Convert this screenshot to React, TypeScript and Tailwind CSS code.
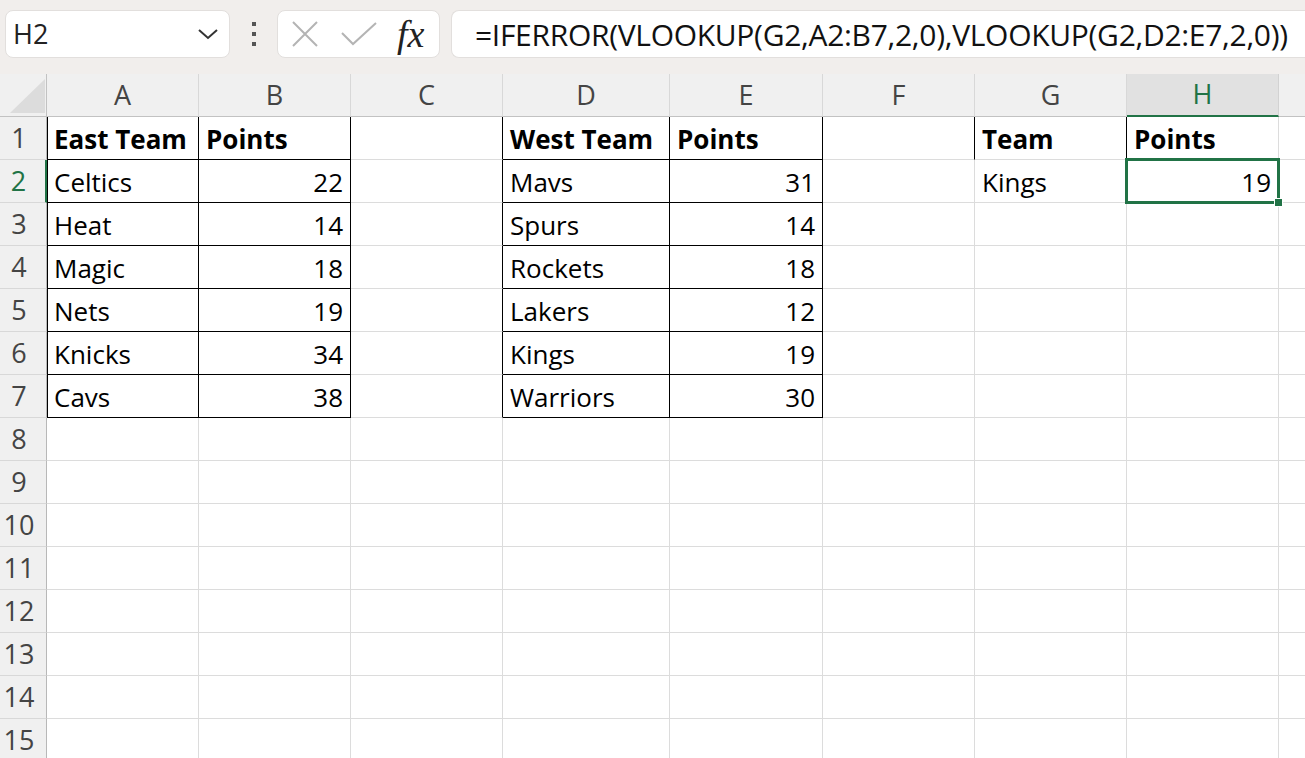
import React from "react";

type Col = { key: string; width: string; label?: boolean };

const columns: Col[] = [
  { key: "A", width: "w-[152px]", label: true },
  { key: "B", width: "w-[152px]", label: true },
  { key: "C", width: "w-[152px]", label: true },
  { key: "D", width: "w-[167px]", label: true },
  { key: "E", width: "w-[153px]", label: true },
  { key: "F", width: "w-[152px]", label: true },
  { key: "G", width: "w-[152px]", label: true },
  { key: "H", width: "w-[152px]", label: true },
  // column I only peeks in at the right edge, its letter is off-screen
  { key: "I", width: "w-[152px]", label: false },
];

type CellValue = { text: string; bold?: boolean; right?: boolean };

const data: Record<string, CellValue> = {
  A1: { text: "East Team", bold: true },
  B1: { text: "Points", bold: true },
  D1: { text: "West Team", bold: true },
  E1: { text: "Points", bold: true },
  G1: { text: "Team", bold: true },
  H1: { text: "Points", bold: true },
  A2: { text: "Celtics" },
  B2: { text: "22", right: true },
  A3: { text: "Heat" },
  B3: { text: "14", right: true },
  A4: { text: "Magic" },
  B4: { text: "18", right: true },
  A5: { text: "Nets" },
  B5: { text: "19", right: true },
  A6: { text: "Knicks" },
  B6: { text: "34", right: true },
  A7: { text: "Cavs" },
  B7: { text: "38", right: true },
  D2: { text: "Mavs" },
  E2: { text: "31", right: true },
  D3: { text: "Spurs" },
  E3: { text: "14", right: true },
  D4: { text: "Rockets" },
  E4: { text: "18", right: true },
  D5: { text: "Lakers" },
  E5: { text: "12", right: true },
  D6: { text: "Kings" },
  E6: { text: "19", right: true },
  D7: { text: "Warriors" },
  E7: { text: "30", right: true },
  G2: { text: "Kings" },
  H2: { text: "19", right: true },
};

const rows = Array.from({ length: 15 }, (_, i) => i + 1);

function FormulaBar() {
  return (
    <div className="flex h-[74px] items-start bg-[#f1eeec] pt-[10px]">
      <div className="ml-[5px] flex h-[48px] w-[225px] items-center justify-between rounded-[8px] border border-[#e2dfdd] bg-white pl-[7px] pr-[10px]">
        <span className="text-[27px] text-[#222]">H2</span>
        <svg width="22" height="14" viewBox="0 0 22 14">
          <path d="M2 3 L11 11 L20 3" fill="none" stroke="#333" strokeWidth="2" />
        </svg>
      </div>
      <div className="flex h-[48px] w-[47px] flex-col items-center justify-center gap-[6px]">
        <span className="block h-[4px] w-[4px] bg-[#555]" />
        <span className="block h-[4px] w-[4px] bg-[#555]" />
        <span className="block h-[4px] w-[4px] bg-[#555]" />
      </div>
      <div className="flex h-[48px] w-[163px] items-center rounded-[8px] border border-[#e2dfdd] bg-white pl-[12px]">
        <svg width="30" height="30" viewBox="0 0 30 30">
          <path d="M3 3 L27 27 M27 3 L3 27" stroke="#b4b4b4" strokeWidth="2" />
        </svg>
        <svg className="ml-[20px]" width="38" height="26" viewBox="0 0 38 26">
          <path d="M2 12 L13 23 L36 2" fill="none" stroke="#b4b4b4" strokeWidth="2" />
        </svg>
        <span className="ml-[19px] font-['Liberation_Serif',serif] text-[38px] italic leading-none text-[#222]">
          fx
        </span>
      </div>
      <div className="ml-[11px] flex h-[48px] flex-1 items-center rounded-l-[8px] border border-r-0 border-[#e2dfdd] bg-white pl-[23px]">
        <span className="text-[30px] tracking-[-0.3px] text-[#111]">
          =IFERROR(VLOOKUP(G2,A2:B7,2,0),VLOOKUP(G2,D2:E7,2,0))
        </span>
      </div>
    </div>
  );
}

function HeaderRow() {
  return (
    <div className="flex h-[43px] shrink-0">
      <div className="relative h-full w-[47px] shrink-0 border-r border-b border-[#c2c2c2] bg-[#f0f0f0]">
        <svg className="absolute left-[10px] top-[5px]" width="35" height="34" viewBox="0 0 35 34">
          <path d="M0 34 L35 34 L35 0 Z" fill="#dcdcdc" />
        </svg>
      </div>
      {columns.map((col) => {
        const active = col.key === "H";
        return (
          <div
            key={col.key}
            className={`${col.width} flex h-full shrink-0 items-center justify-center border-r ${
              active
                ? "border-r-[#d2d2d2] border-b-2 border-b-[#217346] bg-[#e1e1e1] text-[#217346]"
                : "border-r-[#d8d8d8] border-b border-b-[#c2c2c2] bg-[#f0f0f0] text-[#444]"
            } text-[27px]`}
          >
            {col.label ? col.key : null}
          </div>
        );
      })}
    </div>
  );
}

function Cell({ col, row }: { col: Col; row: number }) {
  const id = `${col.key}${row}`;
  const value = data[id];
  const inTable = row <= 7;
  const blackRight =
    (inTable && ["A", "B", "C", "D", "E"].includes(col.key)) ||
    (row === 1 && (col.key === "F" || col.key === "G"));
  const blackBottom = inTable && ["A", "B", "D", "E"].includes(col.key);
  const leftEdge = inTable && col.key === "A";
  const selected = id === "H2";

  return (
    <div
      className={`${col.width} relative flex h-full shrink-0 items-center border-r border-b px-[7px] pt-[2px] text-[26px] text-black ${
        blackRight ? "border-r-black" : "border-r-[#dcdcdc]"
      } ${blackBottom ? "border-b-black" : "border-b-[#dcdcdc]"} ${
        leftEdge ? "shadow-[inset_1px_0_0_#000]" : ""
      } ${value?.right ? "justify-end" : "justify-start"} ${value?.bold ? "font-bold" : ""}`}
    >
      {value && <span className="whitespace-nowrap">{value.text}</span>}
      {selected && (
        <>
          <div className="absolute -inset-[2px] z-10 border-[3px] border-[#217346]" />
          <div className="absolute -right-[5px] -bottom-[5px] z-20 h-[9px] w-[9px] border border-white bg-[#217346]" />
        </>
      )}
    </div>
  );
}

function GridRow({ row }: { row: number }) {
  const active = row === 2;
  return (
    <div className="flex h-[43px] shrink-0">
      <div
        className={`flex h-full w-[47px] shrink-0 items-center justify-center border-b border-b-[#d8d8d8] bg-[#f0f0f0] pr-[8px] text-[27px] ${
          active
            ? "border-r-2 border-r-[#217346] text-[#217346]"
            : "border-r border-r-[#b8b8b8] text-[#444]"
        }`}
      >
        {row}
      </div>
      {columns.map((col) => (
        <Cell key={col.key} col={col} row={row} />
      ))}
    </div>
  );
}

export default function App() {
  return (
    <div className="flex h-[758px] w-[1305px] flex-col overflow-hidden bg-white font-['Open_Sans',sans-serif]">
      <FormulaBar />
      <div className="flex flex-1 flex-col overflow-hidden">
        <HeaderRow />
        {rows.map((row) => (
          <GridRow key={row} row={row} />
        ))}
      </div>
    </div>
  );
}
